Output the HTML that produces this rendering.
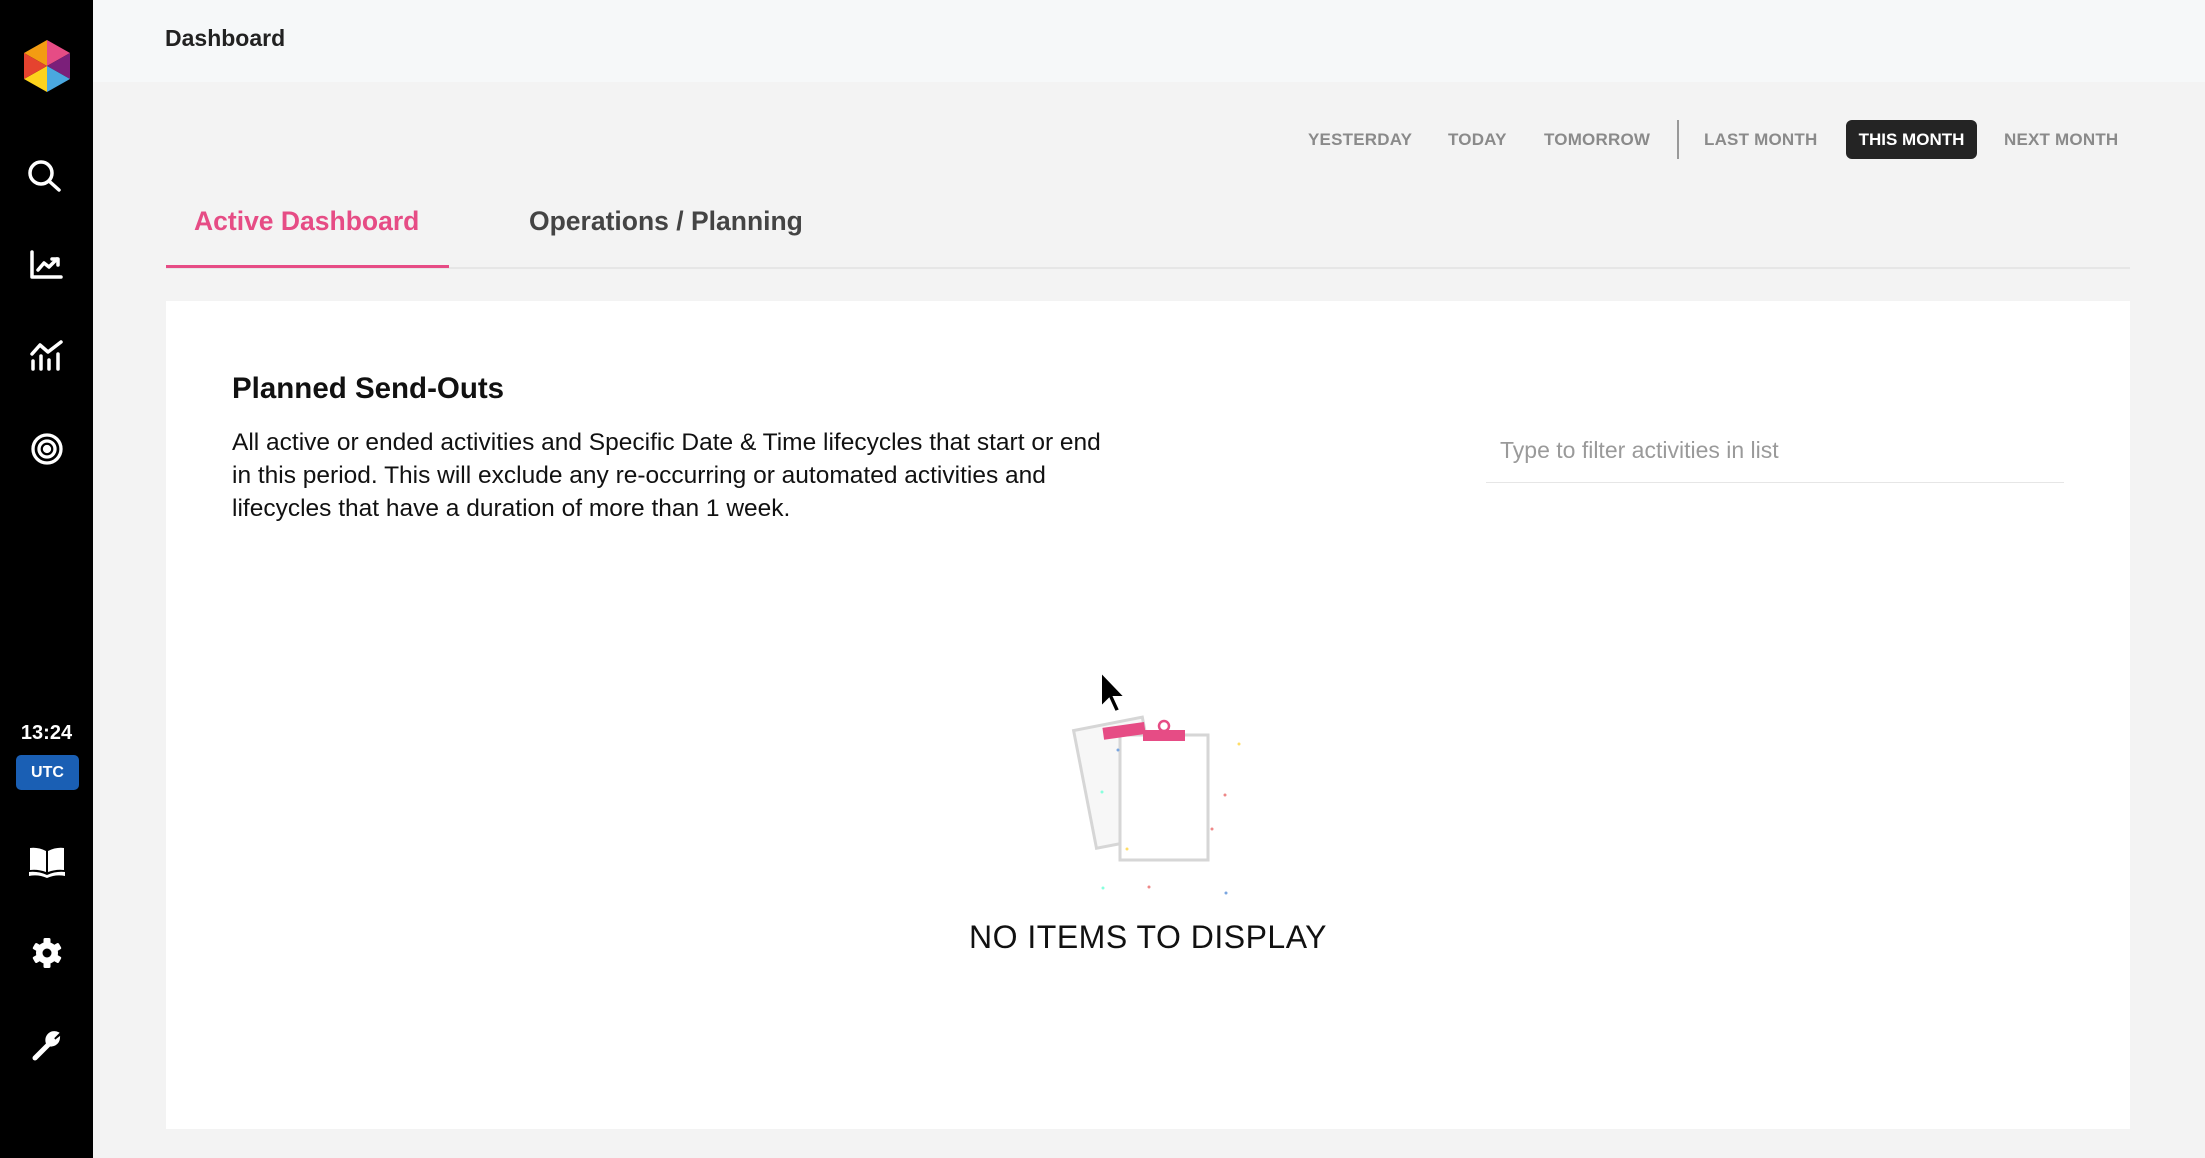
<!DOCTYPE html>
<html><head><meta charset="utf-8">
<style>
*{margin:0;padding:0;box-sizing:border-box}
html,body{width:2205px;height:1158px;overflow:hidden;background:#f3f3f3;font-family:"Liberation Sans",Arial,sans-serif}
#side{position:absolute;left:0;top:0;width:93px;height:1158px;background:#000}
#hdr{position:absolute;left:93px;top:0;right:0;height:82px;background:#f6f8f9}
#hdr span{position:absolute;left:72px;top:25px;font-size:23px;font-weight:bold;color:#222}
.db{position:absolute;top:130px;font-size:17px;font-weight:bold;color:#8a8a8a;letter-spacing:.2px}
#sel{position:absolute;left:1846px;top:120px;width:131px;height:39px;background:#242424;border-radius:6px;color:#fff;font-size:17px;font-weight:bold;text-align:center;line-height:39px}
#div{position:absolute;left:1677px;top:120px;width:2px;height:39px;background:#999}
.tab{position:absolute;top:206px;font-size:26.5px;font-weight:bold}
#card{position:absolute;left:166px;top:301px;width:1964px;height:828px;background:#fff}
.ic{position:absolute;left:26px}
</style></head><body>
<div id="side">
<svg class="ic" style="left:21px;top:38px" width="52" height="56" viewBox="0 0 52 56">
<polygon points="26,28 26,2 3,15" fill="#f39c12"/>
<polygon points="26,28 26,2 49,15" fill="#e64c85"/>
<polygon points="26,28 49,15 49,41" fill="#7b1f7a"/>
<polygon points="26,28 49,41 26,54" fill="#4aa8e0"/>
<polygon points="26,28 26,54 3,41" fill="#fdd31c"/>
<polygon points="26,28 3,41 3,15" fill="#e5432f"/>
</svg>
<svg class="ic" style="top:158px" width="40" height="34" viewBox="0 0 40 34" fill="none" stroke="#fff" stroke-width="3.5" stroke-linecap="round"><circle cx="15" cy="15" r="11"/><line x1="23" y1="23" x2="33" y2="32"/></svg>
<svg class="ic" style="top:250px;left:30px" width="34" height="30" viewBox="0 0 34 30" fill="none" stroke="#fff" stroke-width="3.5" stroke-linecap="round" stroke-linejoin="round"><path d="M2 2V27H31"/><path d="M8 20L14 13L19 17L27 9"/><path d="M22 9H28V15"/></svg>
<svg class="ic" style="top:340px;left:30px" width="34" height="32" viewBox="0 0 34 32" fill="none" stroke="#fff" stroke-width="3.5" stroke-linecap="round" stroke-linejoin="round"><path d="M2 14L10 5L18 12L31 2"/><path d="M3 21V29M11 16V29M19 20V29M28 14V29"/></svg>
<svg class="ic" style="top:432px;left:30px" width="34" height="34" viewBox="0 0 34 34" fill="none" stroke="#fff" stroke-width="3.3"><circle cx="17" cy="17" r="14"/><circle cx="17" cy="17" r="8"/><circle cx="17" cy="17" r="2.5" fill="#fff"/></svg>
<div style="position:absolute;left:0;width:93px;top:722px;text-align:center;color:#fff;font-size:20px;font-weight:bold">13:24</div>
<div style="position:absolute;left:16px;top:755px;width:63px;height:35px;background:#1a5fb4;border-radius:5px;color:#fff;font-size:16px;font-weight:bold;text-align:center;line-height:35px">UTC</div>
<svg class="ic" style="top:846px;left:28px" width="38" height="32" viewBox="0 0 38 32" fill="#fff"><path d="M2 2Q10 1 18 5V26Q10 23 2 24Z"/><path d="M36 2Q28 1 20 5V26Q28 23 36 24Z"/><path d="M1 26Q10 25 19 29Q28 25 37 26V30Q28 28 19 32Q10 28 1 30Z"/></svg>
<svg class="ic" style="top:937px;left:31px" width="32" height="32" viewBox="0 0 32 32"><g fill="#fff"><circle cx="16" cy="16" r="11"/><rect x="12.5" y="1" width="7" height="30" rx="1.5"/><rect x="12.5" y="1" width="7" height="30" rx="1.5" transform="rotate(60 16 16)"/><rect x="12.5" y="1" width="7" height="30" rx="1.5" transform="rotate(120 16 16)"/></g><circle cx="16" cy="16" r="4.5" fill="#000"/></svg>
<svg class="ic" style="top:1028px;left:31px" width="32" height="34" viewBox="0 0 32 34" fill="none" stroke="#fff" stroke-width="5" stroke-linecap="round"><path d="M4 30L17 17"/><path d="M17 17A8 8 0 0 1 27 5L22 10L24 13L28 10A8 8 0 0 1 17 17Z" fill="#fff" stroke-width="2"/></svg>
</div>
<div id="hdr"><span>Dashboard</span></div>
<div class="db" style="left:1308px">YESTERDAY</div>
<div class="db" style="left:1448px">TODAY</div>
<div class="db" style="left:1544px">TOMORROW</div>
<div id="div"></div>
<div class="db" style="left:1704px">LAST MONTH</div>
<div id="sel">THIS MONTH</div>
<div class="db" style="left:2004px">NEXT MONTH</div>
<div class="tab" style="left:194px;color:#e64c85">Active Dashboard</div>
<div class="tab" style="left:529px;color:#444">Operations / Planning</div>
<div style="position:absolute;left:166px;top:267px;width:1964px;height:2px;background:#e6e6e6"></div>
<div style="position:absolute;left:166px;top:265px;width:283px;height:3px;background:#e64c85"></div>
<div id="card">
<div style="position:absolute;left:66px;top:71px;font-size:29.5px;font-weight:bold;color:#111">Planned Send-Outs</div>
<div style="position:absolute;left:66px;top:125px;font-size:24.5px;line-height:33px;color:#111;white-space:nowrap">All active or ended activities and Specific Date &amp; Time lifecycles that start or end<br>in this period. This will exclude any re-occurring or automated activities and<br>lifecycles that have a duration of more than 1 week.</div>
<div style="position:absolute;left:1334px;top:136px;font-size:23px;color:#9a9a9a">Type to filter activities in list</div>
<div style="position:absolute;left:1320px;top:181px;width:578px;height:1px;background:#e6e6e6"></div>
<svg style="position:absolute;left:869px;top:361px" width="220" height="240" viewBox="0 0 220 240" overflow="visible">
<g transform="rotate(-11 60 100)"><rect x="45" y="65" width="70" height="120" fill="#f7f7f7" stroke="#d6d6d6" stroke-width="3"/></g>
<rect x="85" y="73" width="88" height="125" fill="#fff" stroke="#d6d6d6" stroke-width="3"/>
<g transform="rotate(-8 95 68)"><rect x="68" y="62" width="42" height="12" fill="#e64c85"/></g>
<rect x="108" y="68" width="42" height="11" fill="#e64c85"/>
<circle cx="129" cy="64" r="5" fill="none" stroke="#e64c85" stroke-width="2.5"/>
<circle cx="83" cy="88" r="1.5" fill="#7aa6e0"/><circle cx="67" cy="130" r="1.5" fill="#8fd"/><circle cx="190" cy="133" r="1.5" fill="#e88"/><circle cx="177" cy="167" r="1.5" fill="#e88"/><circle cx="92" cy="187" r="1.5" fill="#fd6"/><circle cx="68" cy="226" r="1.5" fill="#8fd"/><circle cx="114" cy="225" r="1.5" fill="#e88"/><circle cx="191" cy="231" r="1.5" fill="#7aa6e0"/><circle cx="204" cy="82" r="1.5" fill="#fd6"/>
<path d="M66 10L66 45L74 37L80 50L85 48L79 35L90 35Z" fill="#000" stroke="#fff" stroke-width="2"/>
</svg>
<div style="position:absolute;left:0;width:1964px;top:618px;text-align:center;font-size:32px;color:#111;letter-spacing:.5px">NO ITEMS TO DISPLAY</div>
</div>
</body></html>
